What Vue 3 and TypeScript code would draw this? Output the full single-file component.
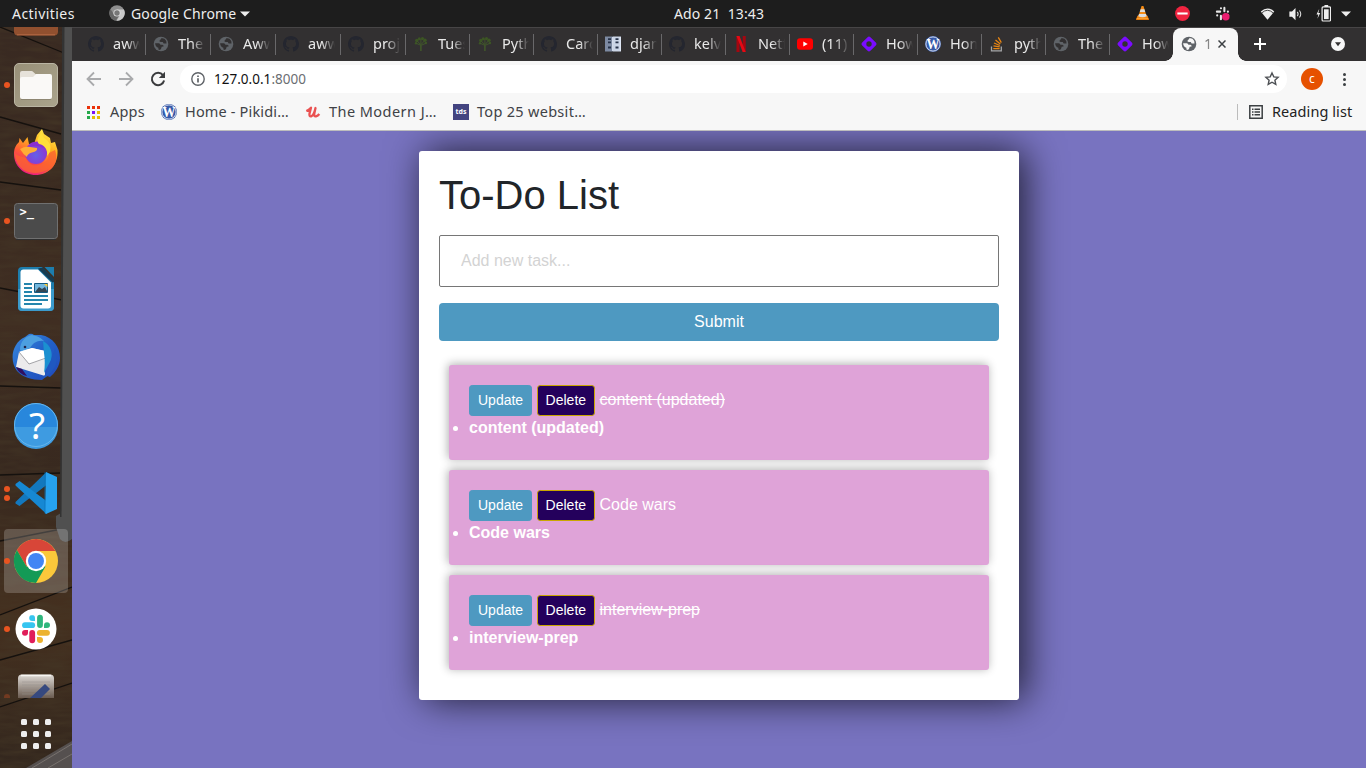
<script setup lang="ts">
interface Tab { icon: string; title: string }
interface DockItem { icon: string; dots: number; active?: boolean }
interface Task { title: string; done: boolean }

const tabs: Tab[] = [
  { icon: 'github', title: 'awwards' },
  { icon: 'globe', title: 'The 10' },
  { icon: 'globe', title: 'Awwards' },
  { icon: 'github', title: 'awwards' },
  { icon: 'github', title: 'project' },
  { icon: 'tree', title: 'Tuesday' },
  { icon: 'tree', title: 'Python' },
  { icon: 'github', title: 'Carol' },
  { icon: 'book', title: 'django' },
  { icon: 'github', title: 'kelvin' },
  { icon: 'netflix', title: 'Netflix' },
  { icon: 'youtube', title: '(11) Y' },
  { icon: 'diamond', title: 'How to' },
  { icon: 'wordpress', title: 'Home' },
  { icon: 'stack', title: 'python' },
  { icon: 'globe', title: 'The 10' },
  { icon: 'diamond', title: 'How to' },
]

const dock: DockItem[] = [
  { icon: 'software', dots: 0 },
  { icon: 'files', dots: 1 },
  { icon: 'firefox', dots: 0 },
  { icon: 'terminal', dots: 1 },
  { icon: 'writer', dots: 0 },
  { icon: 'thunderbird', dots: 0 },
  { icon: 'help', dots: 0 },
  { icon: 'vscode', dots: 2 },
  { icon: 'chrome', dots: 1, active: true },
  { icon: 'slack', dots: 1 },
  { icon: 'gedit', dots: 1 },
]

const tasks: Task[] = [
  { title: 'content (updated)', done: true },
  { title: 'Code wars', done: false },
  { title: 'interview-prep', done: true },
]
</script>

<template>
  <div class="desktop">
    <svg class="sprite" width="0" height="0" aria-hidden="true">
      <defs>
        <linearGradient id="gFolder" x1="0" y1="0" x2="1" y2="1"><stop offset="0" stop-color="#989078" /><stop offset="1" stop-color="#aaa38c" /></linearGradient>
        <linearGradient id="gFox" x1=".8" y1="0" x2=".3" y2="1"><stop offset="0" stop-color="#fff44f" /><stop offset=".35" stop-color="#ffb01f" /><stop offset=".65" stop-color="#ff5a36" /><stop offset="1" stop-color="#e3128b" /></linearGradient>
        <radialGradient id="gFoxCore" cx=".5" cy=".6" r=".6"><stop offset="0" stop-color="#6460e8" /><stop offset="1" stop-color="#9131cf" /></radialGradient>
        <linearGradient id="gBird" x1="0" y1="0" x2="1" y2="1"><stop offset="0" stop-color="#3b8de0" /><stop offset=".5" stop-color="#2260c8" /><stop offset="1" stop-color="#2148b8" /></linearGradient>
        <linearGradient id="gPad" x1="0" y1="0" x2="0" y2="1"><stop offset="0" stop-color="#dedad6" /><stop offset=".6" stop-color="#5c4c40" /></linearGradient>
      </defs>
      <symbol id="github" viewBox="0 0 16 16"><path fill="#24262f" d="M8 0C3.58 0 0 3.58 0 8c0 3.54 2.29 6.53 5.47 7.59.4.07.55-.17.55-.38 0-.19-.01-.82-.01-1.49-2.01.37-2.53-.49-2.69-.94-.09-.23-.48-.94-.82-1.13-.28-.15-.68-.52-.01-.53.63-.01 1.08.58 1.23.82.72 1.21 1.87.87 2.33.66.07-.52.28-.87.51-1.07-1.78-.2-3.64-.89-3.64-3.95 0-.87.31-1.59.82-2.15-.08-.2-.36-1.02.08-2.12 0 0 .67-.21 2.2.82.64-.18 1.32-.27 2-.27s1.36.09 2 .27c1.53-1.04 2.2-.82 2.2-.82.44 1.1.16 1.92.08 2.12.51.56.82 1.27.82 2.15 0 3.07-1.87 3.75-3.65 3.95.29.25.54.73.54 1.48 0 1.07-.01 1.93-.01 2.2 0 .21.15.46.55.38A8.01 8.01 0 0 0 16 8c0-4.42-3.58-8-8-8z" /></symbol>
      <symbol id="globe" viewBox="0 0 16 16"><circle cx="8" cy="8" r="7.3" fill="#5f6368" /><path fill="var(--land, #323031)" d="M2.1 7.200h3.600q1.500.1 1.700 1.500h2q1.300.2 1.200 1.700l-1.900.4q-.4 2.300-1.700 3.100l-1.600-.3V11.700q-2.900-.6-3.300-4.500zM8.500 1.900q-.2 1.700-1.700 2l-.3 1.500 1.300.6 2 .1.8 1.500 2.900-.2q.3-2.700-2-4.600z" /></symbol>
      <symbol id="tree" viewBox="0 0 16 16"><g fill="#3c5524"><circle cx="3.800" cy="4.500" r="1.700" /><circle cx="6.300" cy="2.800" r="1.500" /><circle cx="9.500" cy="2.600" r="1.600" /><circle cx="12" cy="4.300" r="1.700" /><circle cx="3" cy="7.200" r="1.200" /><circle cx="12.900" cy="7" r="1.300" /></g><path d="M4.200 5 7.600 8.500V15M11.600 4.600 8.200 8.500V15M7.900 3v6M3 7.200l4.500 2M13 7.200l-4.500 2" fill="none" stroke="#40552b" stroke-width="1" /></symbol>
      <symbol id="book" viewBox="0 0 16 16"><path fill="#7d8aa2" d="M0 .5h8v15H0z" /><path fill="#cbd5e6" d="M8 .5h8v15H8z" /><path stroke="#273248" stroke-width="1.800" d="M3 3.200h3M3 6.400h3M3 11.500h3M10.500 3.200h3M10.500 6.400h3M10.500 11.500h3" /><path stroke="#e8effb" stroke-width=".8" d="M7.500 1v14M15.300 1v14" /></symbol>
      <symbol id="netflix" viewBox="0 0 16 16"><path fill="#a50610" d="M3.500 0h3v16h-3zM9.700 0h3v16h-3z" /><path fill="#e50914" d="M3.500 0h3l6.200 16h-3z" /></symbol>
      <symbol id="youtube" viewBox="0 0 16 16"><rect y="2.300" width="16" height="11.400" rx="3" fill="#f00" /><path fill="#fff" d="m6.300 5.600 4.400 2.400-4.400 2.400z" /></symbol>
      <symbol id="diamond" viewBox="0 0 16 16"><rect x="2.200" y="2.200" width="11.600" height="11.600" rx="2" transform="rotate(45 8 8)" fill="#7a0cff" /><circle cx="8" cy="8" r="2.700" fill="#323031" /></symbol>
      <symbol id="wordpress" viewBox="0 0 16 16"><circle cx="8" cy="8" r="8" fill="#3659a8" /><circle cx="8" cy="8" r="7.100" fill="none" stroke="#e8ecf6" stroke-width=".9" /><text x="8" y="13" text-anchor="middle" font-family="Liberation Serif, serif" font-weight="700" font-size="14" textLength="13" lengthAdjust="spacingAndGlyphs" fill="#fff">W</text></symbol>
      <symbol id="stack" viewBox="0 0 16 16"><path fill="none" stroke="#a5a6a8" stroke-width="1.300" d="M2.500 10.500v4.300h9.800v-4.300" /><path stroke="#e98512" stroke-width="1.300" d="M4.300 12.600h6.300M4.500 9.800l6.200 1.100M5 7l5.800 2.500M6.500 4l4.800 4M9.300 1.400l3 5.200" /></symbol>
      <symbol id="software" viewBox="0 0 48 48"><rect x="2" y="4" width="44" height="38.500" rx="4" fill="#91502f" /><path stroke="#b56a45" d="M5 41.800h38" /></symbol>
      <symbol id="files" viewBox="0 0 48 48"><rect x="2.500" y="2.500" width="43" height="43" rx="4.500" fill="url(#gFolder)" stroke="#bab5a3" /><path fill="#e6e2da" d="M8 13.500v-1.500q0-2 2-2h9.500q1 0 1.800 1l2.700 2.500H36v6H8z" /><path fill="#6f6857" d="M9 37.500h30v1.200H9z" opacity=".6" /><path fill="#faf9f7" d="M10 16h11l3-3h14q2 0 2 2v21q0 2-2 2H10q-2 0-2-2V18q0-2 2-2z" /></symbol>
      <symbol id="firefox" viewBox="0 0 48 48"><path fill="url(#gFox)" d="M24 46C11 46 2 36.500 2 25c0-6 2-9 5-12l.5-4 3.500 5 4.500-6 1.500 7h5l3-9 5-6 2 5 6 4 1 5 4-1 2.500 8c1 15-9 25-22 25z" /><circle cx="24" cy="24" r="11" fill="url(#gFoxCore)" /><path fill="#8a2fd0" d="M19 14q8-4 14 2l-2 3q-6-4-13-1z" /><path fill="#ffad35" d="M8 20q5-3 10-2l7 1q1 3-5 4.500-5 1.500-5 4.500-4-3-7-8z" /><path fill="#fb6430" opacity=".8" d="M3 24c3 4 7 3 11 5 2 6 7 8 12 7 7-1 11-6 11-12l6-3c5 14-5 24-18 24C12 46 3 36 3 24z" /><path fill="#ffdf3b" d="M30 3c-4 5-6 9-3 12 6 1 9 6 8 12q5-5 3-12l-3-4q-5-3-5-8z" /><path fill="#ef1a85" opacity=".6" d="M4 33c6 12 22 14 33 7-9 8-26 8-33-7z" /></symbol>
      <symbol id="terminal" viewBox="0 0 48 48"><rect x="2.500" y="6.500" width="43" height="35" rx="3" fill="#4b4b4b" stroke="#707070" /><path stroke="#2f2f2f" d="M4 42.500h40" /><text x="7.500" y="19" fill="#fff" font-family="DejaVu Sans Mono, monospace" font-weight="700" font-size="12">&gt;_</text></symbol>
      <symbol id="writer" viewBox="0 0 48 48"><path fill="#1d7dad" d="M10 2h20l12 13v27q0 4-4 4H10q-4 0-4-4V6q0-4 4-4z" /><path fill="#3b9bcc" d="M6 24h36v18q0 4-4 4H10q-4 0-4-4z" /><path fill="#fff" d="M11.500 4.500H26l13 13v23q0 3-3 3H11.500q-3 0-3-3v-33q0-3 3-3z" /><path fill="#1d7dad" d="M32.500 2H42v10z" /><path fill="#163b50" d="M26 3.500 40.500 17.500 42 17v-3L31 2.500z" /><path stroke="#2585ad" stroke-width="2" d="M12 19h8M12 23h8M12 27h8M12 31h24M12 35h24M12 39h18" /><path fill="#73b8df" stroke="#155b82" d="M22.500 18.500h13v9h-13z" /><path fill="#344653" d="m23 27 4-5 3 2 3-2 2.500 5z" /><path fill="#ffcc32" d="M32 19h3.500v3z" /></symbol>
      <symbol id="thunderbird" viewBox="0 0 48 48"><path fill="url(#gBird)" d="M17 1q3-1 5 1h7C41 4 48 14 48 25c0 8-5 15-10 19l-3-1-5 4c-10 0-20-3-25-9-8-11-5-28 8-34z" /><path fill="#4c9fe0" d="M8 17C8 8 14 3 20 2c6 1 9 3 12 6-7-1-11 2-14 7l-7 4z" /><path fill="#ecebec" d="M7 19 20 15l13 3v25L4 34z" /><path fill="#fff" d="m7 19 10 12 16-5v-8l-13-3z" /><path fill="none" stroke="#8b8b91" stroke-width=".8" d="m7 19 10 12 17-6" /><path fill="#1b90d1" d="M31 8c8 4 10 12 8 19l-7 13c1-7 1-14 0-20z" /><path fill="#2058c0" d="M43 15c4 10 2 21-9 29l-5 2c7-6 9-13 10-19z" /><path fill="#301060" d="m4 34 6 2 5 7c-5-1-9-4-11-9z" /><circle cx="13" cy="14" r="1.300" fill="#20244b" /></symbol>
      <symbol id="help" viewBox="0 0 48 48"><circle cx="24" cy="24" r="22" fill="#2887dc" /><path fill="#3e9be1" d="M2 26h44a22 22 0 0 1-44 0z" /><circle cx="24" cy="24" r="21.500" fill="none" stroke="#65b6ed" /><text x="25" y="37.500" text-anchor="middle" fill="#fff" font-family="Noto Sans, sans-serif" font-size="37">?</text></symbol>
      <symbol id="vscode" viewBox="0 0 48 48"><path fill="#1378be" d="m3.500 33 31-30v13L7.500 37 3.500 34.500z" /><path fill="#1688d3" d="m3.500 15 4-3 27 20v13L3.500 16.500z" /><path fill="#27a1ed" d="m34 3 11 5v32l-11 5-1-1z" /><path fill="#0874bb" d="M32 3.500 34 3v42l-2-1z" opacity=".35" /></symbol>
      <symbol id="chrome" viewBox="0 0 48 48"><circle cx="24" cy="24" r="22" fill="#fbc83b" /><path fill="#d84638" d="M24 14h19.500A22 22 0 0 0 4.900 13L14.500 29.500z" /><path fill="#139a56" d="M4.900 13A22 22 0 0 0 24 46l9.500-16.500L14.500 29.500z" /><circle cx="24" cy="24" r="10.200" fill="#fff" /><circle cx="24" cy="24" r="8" fill="#4285f4" /></symbol>
      <symbol id="slack" viewBox="0 0 48 48"><circle cx="24" cy="24" r="20.500" fill="#fff" /><g stroke-width="5.800" stroke-linecap="round"><path stroke="#36c5f0" d="M13 20.200h7.200" /><path stroke="#2eb67d" d="M28 12.700v7.300" /><path stroke="#ecb22e" d="M27.800 27.800h7.200" /><path stroke="#e01e5a" d="M20.200 27.800v7.500" /></g><path fill="#36c5f0" d="M20.200 10a3 3 0 1 0 0 6H23v-3a3 3 0 0 0-3-3z" /><path fill="#2eb67d" d="M38 20.200a3 3 0 1 0-6 0V23h3a3 3 0 0 0 3-3z" /><path fill="#ecb22e" d="M28 38a3 3 0 1 0 0-6h-3v3a3 3 0 0 0 3 3z" /><path fill="#e01e5a" d="M10 27.800a3 3 0 1 0 6 0V25h-3a3 3 0 0 0-3 3z" /></symbol>
      <symbol id="gedit" viewBox="0 0 48 48"><rect x="6" y="1.500" width="36" height="44" rx="4" fill="url(#gPad)" /><path stroke="#f7f5f2" stroke-width="1.500" d="M9 2.500h30" /><path stroke="#96918d" stroke-width=".7" opacity=".7" d="M10 9h28M10 12h28M10 15h28M10 18h28M10 21h28" /><path fill="#36497f" d="m17 26 16-15 5 5-13 13z" /></symbol>
      <symbol id="slackTray" viewBox="0 0 16 16"><g stroke="#e7e7e7" stroke-width="2.200" stroke-linecap="round"><path d="M2 6h3.500M6.300 2.300h.1M10 2v3.500M13.700 6h.1M10.500 10H14M6.300 10.500V14M2.300 10h.1" /></g><circle cx="11.500" cy="11.500" r="4" fill="#e91e70" /></symbol>
    </svg>

    <header class="topbar">
      <span class="activities">Activities</span>
      <svg class="chrome-mono" viewBox="0 0 16 16"><circle cx="8" cy="8" r="7.700" fill="#8f8f8f" /><path fill="#666" d="M1.500 4a7.700 7.700 0 0 0 5.500 11.600l3-5-5-1z" /><path fill="#c9c9c9" d="M8 4.500h6.900A7.700 7.700 0 0 1 7.500 15.700L11 10z" /><circle cx="8" cy="8" r="3.600" fill="#ddd" /><circle cx="8" cy="8" r="2.700" fill="#777" /></svg>
      <span class="appname">Google Chrome</span>
      <svg class="caret" viewBox="0 0 10 6"><path fill="#eee" d="M0 .5h10L5 5.500z" /></svg>
      <span class="clock">Ado 21&nbsp; 13:43</span>
      <div class="tray">
        <svg class="t-vlc" viewBox="0 0 16 16"><path fill="#e87b0c" d="m1 15 1.500-4.500h11L15 15z" /><path fill="#f48b14" d="M7 0h2l3.800 12q-4.800 2-9.600 0z" /><path fill="#ddd" d="m6 3.500-.9 2.800h5.800L10 3.500zM4.300 8.500 3.400 11q4.600 2 9.200 0l-.9-2.500z" /><path fill="#ffad3a" d="M1.700 13h12.600v.8H1.700z" /></svg>
        <svg class="t-dnd" viewBox="0 0 16 16"><circle cx="8" cy="8" r="7.900" fill="#f12440" /><path fill="#fff" d="M2.500 6.900h11v2.200h-11z" /></svg>
        <svg class="t-slack"><use href="#slackTray" /></svg>
        <svg class="t-wifi" viewBox="0 0 16 16"><path fill="#eee" d="M8 14.500.3 5.200Q8-2 15.700 5.200z" /><path fill="none" stroke="#1d1d1d" stroke-width=".9" d="M1.500 6.700Q8 .8 14.500 6.700" /></svg>
        <svg class="t-vol" viewBox="0 0 16 16"><path fill="#eee" d="M1 5h3l4-4v14l-4-4H1z" /><path fill="none" stroke="#ddd" stroke-width="1.200" d="M10 5.500q2 2.500 0 5M12.500 4q3 4 0 8" /></svg>
        <svg class="t-bat" viewBox="0 0 16 18"><path fill="#eee" d="M3.500 4 .5 10h2l-1 4.500L4.500 8.500h-2zM9 0h4v2H9z" /><rect x="6.500" y="2" width="9" height="15" rx="1" fill="none" stroke="#eee" stroke-width="1.300" /><path fill="#eee" d="M8.500 4.500h5V15h-5z" /></svg>
        <svg class="t-caret" viewBox="0 0 10 6"><path fill="#eee" d="M0 .5h10L5 5.500z" /></svg>
      </div>
    </header>

    <div class="workspace">
      <aside class="dock">
        <svg class="wood" viewBox="0 0 72 741" preserveAspectRatio="none">
          <defs>
            <linearGradient id="gWood" x1="0" y1="0" x2="0" y2="1"><stop offset="0" stop-color="#392a22" /><stop offset=".2" stop-color="#3a2a20" /><stop offset=".4" stop-color="#402e22" /><stop offset=".6" stop-color="#38291f" /><stop offset=".8" stop-color="#45301f" /><stop offset="1" stop-color="#33271e" /></linearGradient>
            <filter id="grain" x="0" y="0" width="1" height="1"><feTurbulence type="fractalNoise" baseFrequency=".03 .16" numOctaves="3" seed="4" /><feColorMatrix values="0 0 0 0 .06  0 0 0 0 .04  0 0 0 0 .02  1.200 0 0 0 -.45" /></filter>
          </defs>
          <path fill="url(#gWood)" d="M0 0h72v741H0z" />
          <path filter="url(#grain)" d="M0 0h72v741H0z" />
          <path fill="none" stroke="#15110e" stroke-width="1.300" d="M0 0 64 26M0 90l61 17M0 155l61 8M0 261l62 12M0 359l61 2M0 448l60-2M0 514l72-14M0 588l72-28M0 633l72-20M0 680l72-24" />
          <path fill="#505050" d="M64 0h8v512q-7 6-12 0l-4-12v-11l5-3z" />
          <path fill="#333" d="M62 0h2.500l-3 490H60z" />
          <path fill="#55504f" d="m26 741 46-27v27z" /><path stroke="#77716d" d="m32 741 40-24M48 741l24-14" />
        </svg>
        <div class="dock-list">
          <div v-for="d in dock" :key="d.icon" class="dock-item" :class="{ active: d.active }">
            <span class="dots"><i v-for="n in d.dots" :key="n"></i></span>
            <svg class="app-icon"><use :href="'#' + d.icon" /></svg>
          </div>
        </div>
        <div class="launcher"><i v-for="n in 9" :key="n"></i></div>
      </aside>

      <main class="browser">
        <div class="tabstrip">
          <div v-for="(t, i) in tabs" :key="i" class="tab">
            <svg class="fav"><use :href="'#' + t.icon" /></svg>
            <span class="tab-title">{{ t.title }}</span>
          </div>
          <div class="tab current">
            <svg class="fav"><use href="#globe" /></svg>
            <span class="tab-title">127</span>
            <svg class="close" viewBox="0 0 8 8"><path stroke="#3c4043" stroke-width="1.500" d="m.5.5 7 7M7.500.5l-7 7" /></svg>
          </div>
          <svg class="plus" viewBox="0 0 12 12"><path stroke="#fff" stroke-width="2" d="M6 0v12M0 6h12" /></svg>
          <svg class="tabsearch" viewBox="0 0 14 14"><circle cx="7" cy="7" r="7" fill="#f7f7f7" /><path fill="#323031" d="M4 5.300h6L7 9.300z" /></svg>
        </div>

        <div class="toolbar">
          <svg class="nav" viewBox="0 0 16 16"><path fill="none" stroke="#a9aaac" stroke-width="1.800" d="M15 8H2M8 1.500 1.500 8 8 14.500" /></svg>
          <svg class="nav" viewBox="0 0 16 16"><path fill="none" stroke="#a9aaac" stroke-width="1.800" d="M1 8h13M8 1.500 14.500 8 8 14.500" /></svg>
          <svg class="nav" viewBox="0 0 16 16"><path fill="none" stroke="#3a3b3d" stroke-width="2" d="M13 4.200A6.200 6.200 0 1 0 14.100 9.500" /><path fill="#3a3b3d" d="M15 .8V7H8.800z" /></svg>
          <div class="omnibox">
            <svg class="info" viewBox="0 0 14 14"><circle cx="7" cy="7" r="6.200" fill="none" stroke="#5f6368" stroke-width="1.400" /><path stroke="#5f6368" stroke-width="1.700" d="M7 6.200v4.300M7 3.400v1.500" /></svg>
            <span class="url"><b>127.0.0.1</b>:8000</span>
            <svg class="star" viewBox="0 0 16 16"><path fill="none" stroke="#4c4f53" stroke-width="1.400" d="m8 2 1.800 3.900 4.300.4-3.200 2.900.9 4.200L8 11.200l-3.800 2.200.9-4.200-3.200-2.900 4.300-.4z" /></svg>
          </div>
          <span class="avatar">c</span>
          <span class="menu"><i></i><i></i><i></i></span>
        </div>

        <div class="bookmarks">
          <svg class="bm-apps" viewBox="0 0 13 13"><path fill="#ea3209" d="M0 0h3v3H0zM5 0h3v3H5zM10 0h3v3h-3z" /><path fill="#25a84a" d="M0 5h3v3H0zM0 10h3v3H0z" /><path fill="#7c10f5" d="M5 5h3v3H5z" /><path fill="#e6bd00" d="M10 5h3v3h-3zM5 10h3v3H5zM10 10h3v3h-3z" /></svg>
          <span class="bm b1">Apps</span>
          <svg class="fav"><use href="#wordpress" /></svg>
          <span class="bm b2">Home - Pikidi…</span>
          <svg class="fav" viewBox="0 0 16 16"><path fill="none" stroke="#ea5252" stroke-width="2.300" stroke-linejoin="round" d="M1.300 7Q4 6 6 3.700L4.500 9.500Q4 12.800 6.300 12.300 9 11 10.500 4L9.300 9.500Q8.800 12.700 11 12.300 13 11.800 14.300 10" /></svg>
          <span class="bm b3">The Modern J…</span>
          <span class="tds">tds</span>
          <span class="bm b4">Top 25 websit…</span>
          <i class="bm-line"></i>
          <svg class="bm-list" viewBox="0 0 14 14"><path fill="none" stroke="#3c4043" stroke-width="1.500" d="M.8.800h12.400v12.400H.8z" /><path stroke="#3c4043" stroke-width="1.400" d="M3 4.200h1.500M5.500 4.200H11M3 7h1.500M5.500 7H11M3 9.800h1.500M5.500 9.800H11" /></svg>
          <span class="bm b5">Reading list</span>
        </div>

        <section class="page">
          <div class="card">
            <h1>To-Do List</h1>
            <form @submit.prevent>
              <input type="text" placeholder="Add new task..." />
              <button class="submit" type="submit">Submit</button>
            </form>
            <div class="tasks">
              <div v-for="t in tasks" :key="t.title" class="item">
                <a class="btn update">Update</a> <a class="btn delete">Delete</a> <s v-if="t.done">{{ t.title }}</s><span v-else>{{ t.title }}</span>
                <li>{{ t.title }}</li>
              </div>
            </div>
          </div>
        </section>
      </main>
    </div>
  </div>
</template>

<style>
body { margin: 0; overflow: hidden; }
</style>

<style scoped>
* { box-sizing: border-box; }
.desktop { width: 1366px; height: 768px; overflow: hidden; position: relative; display: flex; flex-direction: column; font-family: "Noto Sans", "Open Sans", sans-serif; }
.sprite { position: absolute; }
svg { display: block; flex: none; }

.topbar { position: relative; height: 27px; flex: none; background: #1d1d1d; color: #eee; display: flex; align-items: center; font-size: 14px; line-height: 27px; white-space: nowrap; }
.activities { width: 63px; margin-left: 12px; letter-spacing: .45px; }
.chrome-mono { width: 16px; height: 16px; margin-left: 34px; margin-top: -1px; }
.appname { width: 104px; margin-left: 6px; letter-spacing: .15px; }
.caret { width: 10px; height: 6px; margin-left: 5px; }
.clock { margin-left: 424px; margin-top: -1px; letter-spacing: .1px; }
.tray { margin-left: auto; display: flex; align-items: center; padding-right: 15px; }
.t-vlc { width: 15px; height: 17px; margin-right: 25px; }
.t-dnd { width: 15px; height: 15px; margin-right: 25px; }
.t-slack { width: 15px; height: 15px; margin-right: 29px; }
.t-wifi { width: 17px; height: 14px; margin-right: 12px; }
.t-vol { width: 15px; height: 14px; margin-right: 13px; }
.t-bat { width: 15px; height: 17px; margin-right: 10px; }
.t-caret { width: 10px; height: 6px; }

.workspace { flex: 1; display: flex; min-height: 0; }
.dock { position: relative; width: 72px; flex: none; display: flex; flex-direction: column; background: #3b2b21; }
.wood { position: absolute; inset: 0; width: 72px; height: 741px; }
.dock-list { position: relative; height: 671px; flex: none; overflow: hidden; display: flex; flex-direction: column; align-items: center; gap: 4px; }
.dock-item:first-child { margin-top: -42px; }
.dock-item { position: relative; flex: none; width: 64px; height: 64px; border-radius: 4px; display: flex; align-items: center; justify-content: center; }
.dock-item.active { background: rgba(255, 255, 255, .2); }
.dots { position: absolute; left: 0; top: 0; height: 64px; width: 6px; display: flex; flex-direction: column; justify-content: center; gap: 3px; }
.dots i { width: 6px; height: 6px; border-radius: 50%; background: #e95420; }
.dock-item:last-child .dots { opacity: .3; }
.app-icon { width: 48px; height: 48px; }
.launcher { position: relative; width: 30px; display: grid; grid-template-columns: repeat(3, 6px); gap: 6px; margin: 21px 0 0 21px; }
.launcher i { width: 6px; height: 6px; border-radius: 1.5px; background: #eee; }

.browser { flex: 1; display: flex; flex-direction: column; min-width: 0; }
.tabstrip { height: 34px; flex: none; background: #323031; border-top: 1px solid #474546; display: flex; align-items: center; padding-left: 9px; }
.tab { width: 64px; flex: none; height: 33px; display: flex; align-items: center; padding: 0 0 1px 7px; position: relative; }
.tab:nth-child(-n+5) { width: 65px; }
.tab:not(.current)::after { content: ""; position: absolute; right: 0; top: 6px; width: 1px; height: 21px; background: #69686a; }
.tab:nth-child(17)::after { display: none; }
.fav { width: 16px; height: 16px; }
.tab-title { margin: -2px 0 0 9px; width: 27px; overflow: hidden; white-space: nowrap; font-size: 14.500px; color: #e9e9e9; -webkit-mask-image: linear-gradient(90deg, #000 50%, transparent 100%); mask-image: linear-gradient(90deg, #000 50%, transparent 100%); }
.tab.current { width: 65px; margin-left: -1px; background: #f7f7f7; border-radius: 8px 8px 0 0; --land: #f7f7f7; padding-left: 8px; }
.current::before, .current::after { content: ""; position: absolute; bottom: 0; width: 8px; height: 8px; }
.current::before { left: -8px; background: radial-gradient(circle at 0 0, transparent 7.500px, #f7f7f7 8px); }
.current::after { right: -8px; background: radial-gradient(circle at 100% 0, transparent 7.500px, #f7f7f7 8px); }
.current .tab-title { width: 8px; margin-left: 7px; color: #777; }
.close { width: 8px; height: 8px; margin-left: 6px; }
.plus { width: 12px; height: 12px; margin: 0 0 1px 16px; }
.tabsearch { width: 14px; height: 14px; margin: 0 21px 1px auto; }

.toolbar { height: 36px; flex: none; background: #f7f7f7; display: flex; align-items: center; padding-left: 14px; gap: 16px; }
.nav { width: 16px; height: 16px; }
.omnibox { width: 1107px; height: 28px; border-radius: 14px; background: #fff; display: flex; align-items: center; margin-left: -2px; flex: none; padding: 0 7px 0 11px; }
.info { width: 14px; height: 14px; }
.url { margin-left: 9px; font-size: 13.500px; color: #6b6e72; letter-spacing: .02px; }
.url b { font-weight: 400; color: #111; }
.star { width: 16px; height: 16px; margin-left: auto; }
.avatar { width: 22px; height: 22px; flex: none; border-radius: 50%; background: #e65100; color: #fff; font-size: 12px; line-height: 21px; text-align: center; margin-left: -2px; }
.menu { display: flex; flex-direction: column; gap: 2px; margin-left: 4px; }
.menu i { width: 3px; height: 3px; border-radius: 50%; background: #3c4043; }

.bookmarks { height: 34px; flex: none; background: #f7f7f7; border-bottom: 1px solid #bdbdbd; display: flex; align-items: center; padding: 0 14px 3px 15px; font-size: 14.500px; color: #404246; white-space: nowrap; }
.bm-apps { width: 13px; height: 13px; }
.bm { flex: none; position: relative; margin-top: -2px; }
.b1 { width: 35px; margin-left: 10px; margin-right: 16px; letter-spacing: .2px; }
.b2 { width: 105px; margin-left: 8px; margin-right: 15px; letter-spacing: .16px; }
.b3 { width: 109px; margin-left: 8px; margin-right: 15px; letter-spacing: .45px; }
.b4 { margin-left: 8px; letter-spacing: .3px; }
.tds { width: 16px; height: 16px; background: #434480; color: #fff; font-size: 7px; font-weight: 700; line-height: 15px; text-align: center; }
.bm-line { width: 1px; height: 16px; background: #bcbcbc; margin-left: auto; margin-right: 11px; }
.bm-list { width: 14px; height: 14px; margin-right: 9px; }
.b5 { width: 80px; color: #222; letter-spacing: .08px; }

.page { flex: 1; min-height: 0; background: #7873c0; padding-top: 20px; overflow: hidden; font-family: "Liberation Sans", Arial, sans-serif; font-size: 16px; line-height: 24px; }
.card { width: 600px; height: 549px; margin: 0 auto; padding: 20px; border-radius: 3px; background: #fff; box-shadow: 6px 0 38px 0 rgba(0, 0, 0, .75); }
h1 { margin: 0 0 16px; font-weight: 400; font-size: 40px; line-height: 48px; color: #212529; }
form { display: flex; flex-direction: column; }
input { width: 560px; height: 52px; border: 1px solid #767676; border-radius: 2px; padding: 0 21px; font: 16px "Liberation Sans", Arial, sans-serif; outline: 0; }
input::placeholder { color: #d3d3d3; }
.submit { margin-top: 16px; height: 38px; border: 0; border-radius: 4px; background: #4e99c1; color: #fff; font: 16px "Liberation Sans", Arial, sans-serif; padding: 0; }
.tasks { margin-top: 24px; padding: 0 10px; display: flex; flex-direction: column; gap: 10px; }
.item { height: 95px; padding: 20px; border-radius: 3px; background: #dfa3d8; color: #fff; box-shadow: -1px -1px 10px 0 rgba(0, 0, 0, .32); }
.btn { display: inline-block; vertical-align: middle; padding: 4px 8px; border: 1px solid #4e99c1; border-radius: 3.200px; background: #4e99c1; font-size: 14px; line-height: 21px; color: #fff; }
.delete { background: #24005c; border-color: #c9a600; }
li { font-weight: 700; }
</style>
